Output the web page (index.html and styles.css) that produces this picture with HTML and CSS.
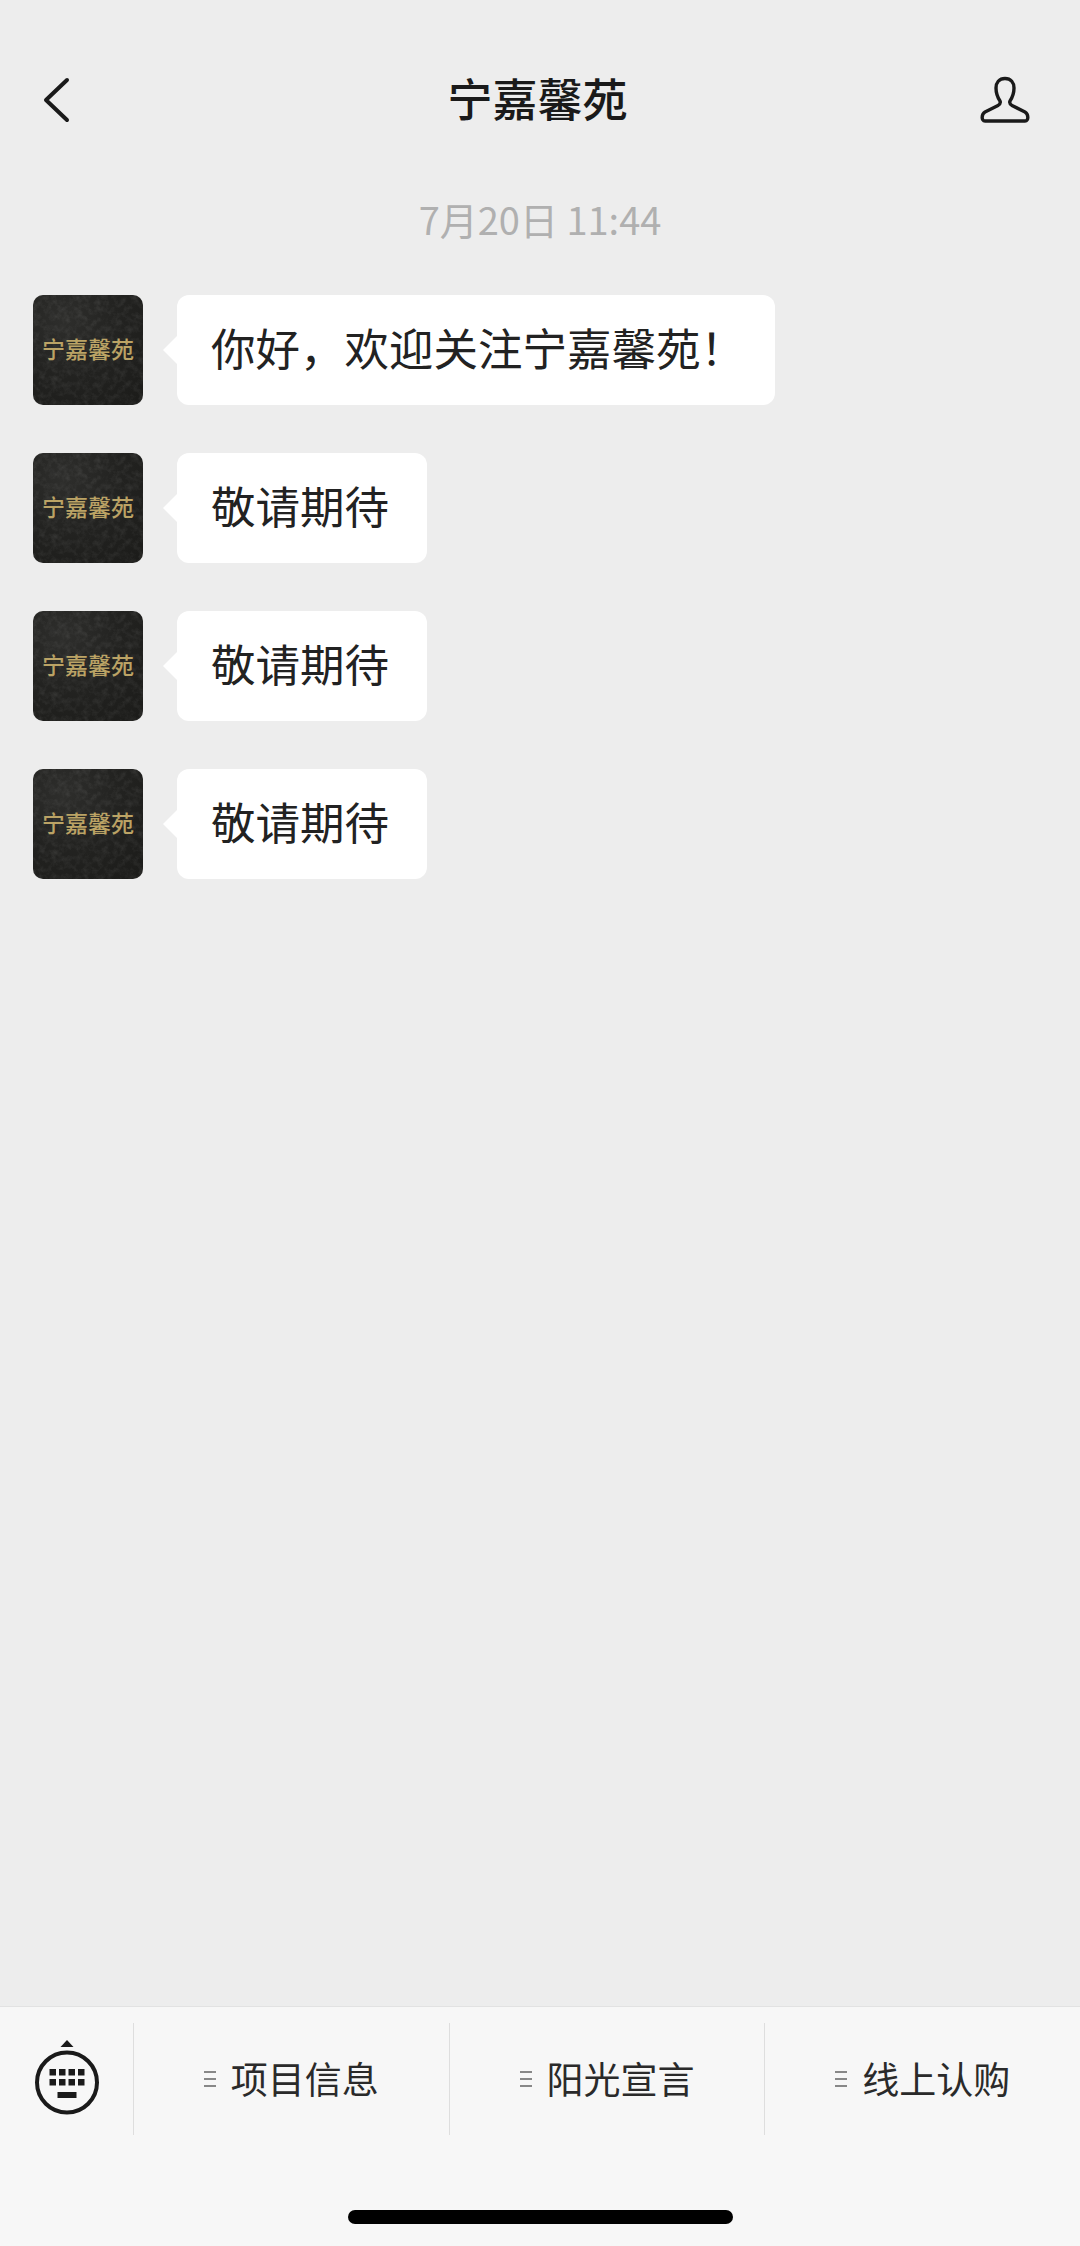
FILE: index.html
```html
<!DOCTYPE html>
<html lang="zh-CN">
<head>
    <meta charset="UTF-8">
    <meta name="viewport" content="width=device-width, initial-scale=1.0">
    <title>宁嘉馨苑</title>
    <link rel="stylesheet" href="styles.css">
</head>
<body>
    <svg class="defs" width="0" height="0">
        <filter id="grain" x="0" y="0" width="100%" height="100%">
            <feTurbulence type="fractalNoise" baseFrequency="0.16" numOctaves="5" seed="7"/>
            <feColorMatrix values="0 0 0 0 1  0 0 0 0 1  0 0 0 0 1  1.6 0 0 0 -0.62"/>
        </filter>
        <symbol id="avatar-grain" viewBox="0 0 110 110">
            <rect width="110" height="110" filter="url(#grain)"/>
        </symbol>
    </svg>

    <div class="page">
        <header class="header">
            <svg class="back" width="30" height="48" viewBox="0 0 30 48">
                <path d="M25 4 L4 24 L25 44" fill="none" stroke="#1a1a1a" stroke-width="4" stroke-linecap="round" stroke-linejoin="round"/>
            </svg>
            <h1 class="title">宁嘉馨苑</h1>
            <svg class="profile" width="50" height="48" viewBox="0 0 50 48">
                <path d="M25 2.5C19 2.5 16 7 16 12C16 18 18 22 20 25C21 27 20 28 18 29.5L5 36C1.5 38 1 45 5 45H45C49 45 48.5 38 45 36L32 29.5C30 28 29 27 30 25C32 22 34 18 34 12C34 7 31 2.5 25 2.5Z" fill="none" stroke="#1a1a1a" stroke-width="3.4" stroke-linejoin="round"/>
            </svg>
        </header>

        <main class="chat">
            <div class="time">7月20日 11:44</div>
            <div class="messages">
                <div class="message">
                    <div class="avatar"><svg class="avatar-tex"><use href="#avatar-grain"/></svg><span>宁嘉馨苑</span></div>
                    <div class="bubble bubble-end">你好&#xFF0C;欢迎关注宁嘉馨苑&#xFF01;</div>
                </div>
                <div class="message">
                    <div class="avatar"><svg class="avatar-tex"><use href="#avatar-grain"/></svg><span>宁嘉馨苑</span></div>
                    <div class="bubble">敬请期待</div>
                </div>
                <div class="message">
                    <div class="avatar"><svg class="avatar-tex"><use href="#avatar-grain"/></svg><span>宁嘉馨苑</span></div>
                    <div class="bubble">敬请期待</div>
                </div>
                <div class="message">
                    <div class="avatar"><svg class="avatar-tex"><use href="#avatar-grain"/></svg><span>宁嘉馨苑</span></div>
                    <div class="bubble">敬请期待</div>
                </div>
            </div>
        </main>

        <footer class="footer">
            <nav class="menu">
                <div class="menu-switch">
                    <svg width="70" height="82" viewBox="0 0 70 82">
                        <path d="M35 2 L41.5 9 H28.5 Z" fill="#1a1a1a"/>
                        <circle cx="35" cy="44.5" r="30" fill="none" stroke="#1a1a1a" stroke-width="4"/>
                        <g fill="#1a1a1a">
                            <rect x="17.5" y="31" width="6.5" height="6.5"/>
                            <rect x="27" y="31" width="6.5" height="6.5"/>
                            <rect x="36.5" y="31" width="6.5" height="6.5"/>
                            <rect x="46" y="31" width="6.5" height="6.5"/>
                            <rect x="17.5" y="41" width="6.5" height="6.5"/>
                            <rect x="27" y="41" width="6.5" height="6.5"/>
                            <rect x="36.5" y="41" width="6.5" height="6.5"/>
                            <rect x="46" y="41" width="6.5" height="6.5"/>
                            <rect x="25.5" y="54" width="19" height="6"/>
                        </g>
                    </svg>
                </div>
                <div class="menu-item">
                    <svg class="burger" width="12" height="16" viewBox="0 0 12 16"><path d="M0 1H12M0 8H12M0 15H12" stroke="#888" stroke-width="1.8"/></svg>
                    <span>项目信息</span>
                </div>
                <div class="menu-item">
                    <svg class="burger" width="12" height="16" viewBox="0 0 12 16"><path d="M0 1H12M0 8H12M0 15H12" stroke="#888" stroke-width="1.8"/></svg>
                    <span>阳光宣言</span>
                </div>
                <div class="menu-item">
                    <svg class="burger" width="12" height="16" viewBox="0 0 12 16"><path d="M0 1H12M0 8H12M0 15H12" stroke="#888" stroke-width="1.8"/></svg>
                    <span>线上认购</span>
                </div>
            </nav>
            <div class="home-bar"></div>
        </footer>
    </div>
</body>
</html>
```

FILE: styles.css
```css
* {
    box-sizing: border-box;
}
body {
    margin: 0;
    font-family: "Noto Sans CJK SC", "Noto Sans", sans-serif;
    color: #1a1a1a;
    background-color: #ededed;
}
.defs {
    display: block;
    height: 0;
}
.page {
    display: flex;
    flex-direction: column;
    height: 2246px;
    overflow: hidden;
}
.header {
    display: grid;
    grid-template-columns: 1fr auto 1fr;
    align-items: center;
    height: 72px;
    margin-top: 64px;
    padding: 0 50px 0 42px;
    flex: none;
}
.back {
    justify-self: start;
}
.profile {
    justify-self: end;
}
.title {
    align-self: start;
    margin: 0;
    padding-left: 3px;
    font-size: 45px;
    line-height: 68px;
    font-weight: 500;
}
.chat {
    flex: 1;
    min-height: 0;
    padding: 64px 33px 0;
}
.time {
    height: 44px;
    text-align: center;
    font-size: 38px;
    line-height: 38px;
    color: #b0b0b0;
}
.messages {
    display: flex;
    flex-direction: column;
    gap: 48px;
    margin-top: 51px;
}
.message {
    display: flex;
    align-items: flex-start;
    gap: 34px;
}
.avatar {
    position: relative;
    display: flex;
    align-items: center;
    justify-content: center;
    flex: none;
    width: 110px;
    height: 110px;
    padding-bottom: 5px;
    border-radius: 10px;
    overflow: hidden;
    background: radial-gradient(circle at 28% 22%, #2e2e2c 0, #232321 45%, #1b1b19 100%);
}
.avatar-tex {
    position: absolute;
    top: 0;
    left: 0;
    width: 110px;
    height: 110px;
    opacity: 0.1;
}
.avatar span {
    position: relative;
    font-size: 23px;
    line-height: 30px;
    font-weight: 500;
    white-space: nowrap;
    color: #bba365;
}
.bubble {
    position: relative;
    height: 110px;
    padding: 0 38px 0 34px;
    border-radius: 12px;
    background: #fff;
    font-size: 44.5px;
    line-height: 104px;
    white-space: nowrap;
    color: #222;
}
.bubble::before {
    content: "";
    position: absolute;
    top: 41px;
    left: -14px;
    border-top: 14px solid transparent;
    border-bottom: 14px solid transparent;
    border-right: 14px solid #fff;
}
.bubble-end {
    padding-right: 30px;
}
.footer {
    flex: none;
    height: 240px;
    border-top: 1px solid #e2e2e2;
    background: #f7f7f7;
}
.menu {
    display: flex;
    height: 112px;
    margin-top: 16px;
}
.menu-switch {
    display: flex;
    align-items: center;
    justify-content: center;
    flex: none;
    width: 133px;
}
.menu-item {
    display: flex;
    align-items: center;
    justify-content: center;
    gap: 15px;
    flex: 1;
    border-left: 1px solid #dedede;
    font-size: 37px;
    color: #2a2a2a;
}
.menu-item span {
    padding-bottom: 3px;
}
.home-bar {
    width: 385px;
    height: 14px;
    margin: 75px auto 0;
    border-radius: 7px;
    background: #000;
}
```
